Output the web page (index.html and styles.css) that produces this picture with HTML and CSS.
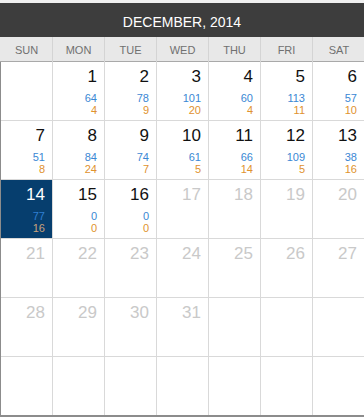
FILE: index.html
```html
<!DOCTYPE html>
<html>
<head>
<meta charset="utf-8">
<link rel="stylesheet" href="styles.css">
</head>
<body>
<div class="cal">
  <div class="title">DECEMBER, 2014</div>
  <div class="days">
    <div class="dn">SUN</div><div class="dn">MON</div><div class="dn">TUE</div><div class="dn">WED</div><div class="dn">THU</div><div class="dn">FRI</div><div class="dn last">SAT</div>
  </div>
  <div class="grid">
    <div class="c"></div>
    <div class="c"><div class="n">1</div><div class="b">64</div><div class="o">4</div></div>
    <div class="c"><div class="n">2</div><div class="b">78</div><div class="o">9</div></div>
    <div class="c"><div class="n">3</div><div class="b">101</div><div class="o">20</div></div>
    <div class="c"><div class="n">4</div><div class="b">60</div><div class="o">4</div></div>
    <div class="c"><div class="n">5</div><div class="b">113</div><div class="o">11</div></div>
    <div class="c"><div class="n">6</div><div class="b">57</div><div class="o">10</div></div>

    <div class="c"><div class="n">7</div><div class="b">51</div><div class="o">8</div></div>
    <div class="c"><div class="n">8</div><div class="b">84</div><div class="o">24</div></div>
    <div class="c"><div class="n">9</div><div class="b">74</div><div class="o">7</div></div>
    <div class="c"><div class="n">10</div><div class="b">61</div><div class="o">5</div></div>
    <div class="c"><div class="n">11</div><div class="b">66</div><div class="o">14</div></div>
    <div class="c"><div class="n">12</div><div class="b">109</div><div class="o">5</div></div>
    <div class="c"><div class="n">13</div><div class="b">38</div><div class="o">16</div></div>

    <div class="c sel"><div class="n">14</div><div class="b">77</div><div class="o">16</div></div>
    <div class="c"><div class="n">15</div><div class="b">0</div><div class="o">0</div></div>
    <div class="c"><div class="n">16</div><div class="b">0</div><div class="o">0</div></div>
    <div class="c fade"><div class="n">17</div></div>
    <div class="c fade"><div class="n">18</div></div>
    <div class="c fade"><div class="n">19</div></div>
    <div class="c fade"><div class="n">20</div></div>

    <div class="c fade"><div class="n">21</div></div>
    <div class="c fade"><div class="n">22</div></div>
    <div class="c fade"><div class="n">23</div></div>
    <div class="c fade"><div class="n">24</div></div>
    <div class="c fade"><div class="n">25</div></div>
    <div class="c fade"><div class="n">26</div></div>
    <div class="c fade"><div class="n">27</div></div>

    <div class="c fade"><div class="n">28</div></div>
    <div class="c fade"><div class="n">29</div></div>
    <div class="c fade"><div class="n">30</div></div>
    <div class="c fade"><div class="n">31</div></div>
    <div class="c"></div>
    <div class="c"></div>
    <div class="c"></div>

    <div class="c lr"></div>
    <div class="c lr"></div>
    <div class="c lr"></div>
    <div class="c lr"></div>
    <div class="c lr"></div>
    <div class="c lr"></div>
    <div class="c lr"></div>
  </div>
</div>
</body>
</html>
```
FILE: styles.css
```css
html, body {
  margin: 0;
  padding: 0;
  background: #f0f0f0;
  overflow: hidden;
}
body {
  padding-top: 3px;
  font-family: "Liberation Sans", Arial, sans-serif;
}
.cal {
  width: 364px;
  background: #fff;
}
.title {
  height: 34px;
  background: #3d3d3d;
  color: #fff;
  font-size: 14px;
  line-height: 38px;
  text-align: center;
}
.days {
  display: grid;
  grid-template-columns: repeat(6, 52px) 52px;
  height: 24px;
  background: #e8e8e8;
  border-bottom: 1px solid #a9a9a9;
  padding-left: 1px;
}
.dn {
  border-right: 1px solid #d4d4d4;
  color: #707070;
  font-size: 11px;
  line-height: 27px;
  text-align: center;
}
.dn.last {
  border-right: none;
}
.grid {
  display: grid;
  grid-template-columns: repeat(6, 52px) 51px;
  border-left: 1px solid #8c8c8c;
  border-bottom: 2px solid #8c8c8c;
}
.c {
  box-sizing: border-box;
  height: 59px;
  border-right: 1px solid #d9d9d9;
  border-bottom: 1px solid #d9d9d9;
  padding: 6px 7px 0 0;
  text-align: right;
}
.c:nth-child(7n) {
  border-right: none;
}
.c.lr {
  height: 58px;
  border-bottom: none;
}
.n {
  font-size: 17px;
  line-height: 17px;
  color: #111;
  margin-bottom: 7px;
}
.b, .o {
  font-size: 11px;
  line-height: 12px;
}
.b {
  color: #3a87d4;
}
.o {
  color: #e0922e;
}
.fade .n {
  color: #c9c9c9;
}
.sel {
  background: #063e6e;
}
.sel .n {
  color: #fff;
}
.sel .b {
  color: #2f7fd2;
}
.sel .o {
  color: #c9a27c;
}
```
